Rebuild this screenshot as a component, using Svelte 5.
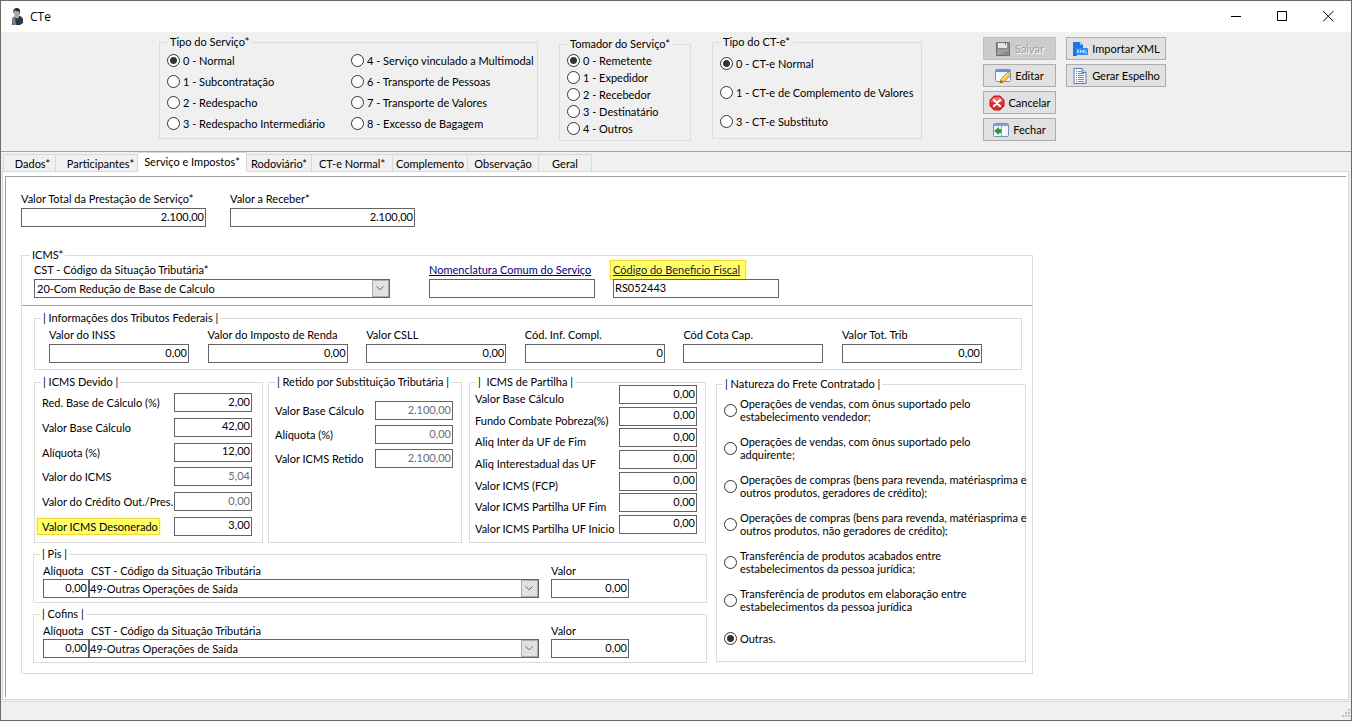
<script lang="ts">
	let tipoServico = '0 - Normal';
	let tomador = '0 - Remetente';
	let tipoCte = '0 - CT-e Normal';
	let natureza = 'Outras.';
	let activeTab = 'Serviço e Impostos*';

	const tiposServico: string[] = [
		'0 - Normal',
		'1 - Subcontratação',
		'2 - Redespacho',
		'3 - Redespacho Intermediário',
		'4 - Serviço vinculado a Multimodal',
		'6 - Transporte de Pessoas',
		'7 - Transporte de Valores',
		'8 - Excesso de Bagagem'
	];
	const tomadores: string[] = [
		'0 - Remetente',
		'1 - Expedidor',
		'2 - Recebedor',
		'3 - Destinatário',
		'4 - Outros'
	];
	const tiposCte: string[] = [
		'0 - CT-e Normal',
		'1 - CT-e de Complemento de Valores',
		'3 - CT-e Substituto'
	];
	const tabs: string[] = [
		'Dados*',
		'Participantes*',
		'Serviço e Impostos*',
		'Rodoviário*',
		'CT-e Normal*',
		'Complemento',
		'Observação',
		'Geral'
	];
	const naturezas: string[] = [
		'Operações de vendas, com ônus suportado pelo\nestabelecimento vendedor;',
		'Operações de vendas, com ônus suportado pelo\nadquirente;',
		'Operações de compras (bens para revenda, matériasprima e\noutros produtos, geradores de crédito);',
		'Operações de compras (bens para revenda, matériasprima e\noutros produtos, não geradores de crédito);',
		'Transferência de produtos acabados entre\nestabelecimentos da pessoa jurídica;',
		'Transferência de produtos em elaboração entre\nestabelecimentos da pessoa jurídica',
		'Outras.'
	];

	let totais = [
		{ label: 'Valor Total da Prestação de Serviço*', value: '2.100,00' },
		{ label: 'Valor a Receber*', value: '2.100,00' }
	];
	let federais = [
		{ label: 'Valor do INSS', value: '0,00' },
		{ label: 'Valor do Imposto de Renda', value: '0,00' },
		{ label: 'Valor CSLL', value: '0,00' },
		{ label: 'Cód. Inf. Compl.', value: '0' },
		{ label: 'Cód Cota Cap.', value: '' },
		{ label: 'Valor Tot. Trib', value: '0,00' }
	];
	let devido = [
		{ label: 'Red. Base de Cálculo (%)', value: '2,00' },
		{ label: 'Valor Base Cálculo', value: '42,00' },
		{ label: 'Alíquota (%)', value: '12,00' },
		{ label: 'Valor do ICMS', value: '5,04', disabled: true },
		{ label: 'Valor do Crédito Out./Pres.', value: '0,00', disabled: true },
		{ label: 'Valor ICMS Desonerado', value: '3,00', marked: true }
	];
	let retido = [
		{ label: 'Valor Base Cálculo', value: '2.100,00' },
		{ label: 'Alíquota (%)', value: '0,00' },
		{ label: 'Valor ICMS Retido', value: '2.100,00' }
	];
	let partilha = [
		{ label: 'Valor Base Cálculo', value: '0,00' },
		{ label: 'Fundo Combate Pobreza(%)', value: '0,00' },
		{ label: 'Aliq Inter da UF de Fim', value: '0,00' },
		{ label: 'Aliq Interestadual das UF', value: '0,00' },
		{ label: 'Valor ICMS (FCP)', value: '0,00' },
		{ label: 'Valor ICMS Partilha UF Fim', value: '0,00' },
		{ label: 'Valor ICMS Partilha UF Inicio', value: '0,00' }
	];
	let contribuicoes = [
		{ nome: 'Pis', aliquota: '0,00', valor: '0,00' },
		{ nome: 'Cofins', aliquota: '0,00', valor: '0,00' }
	];
</script>

<div class="window">
	<header class="titleBar">
		<svg class="appIcon" width="16" height="18" viewBox="0 0 16 18">
			<path d="M3 17 V12 Q3 9 7 8 L11 8 Q14 9 14 12 V15 L11 17 Z" fill="#2a3646" />
			<path d="M3 12 Q4 9 6 9 L7 17 H4 Z" fill="#7b8794" />
			<path d="M6 8 L8 13 L10 8 Z" fill="#dfe3e6" />
			<path d="M8 9 L7 11 L8 14 L9 11 Z" fill="#19222e" />
			<ellipse cx="8" cy="5" rx="3" ry="4" fill="#b3a79d" />
			<path d="M4 5 Q4 0 8 0 Q12 0 11 6 L10 3 Q7 4 6 2 L5 4 Z" fill="#252a30" />
		</svg>
		<h1>CTe</h1>
		<div class="windowButtons">
			<button aria-label="Minimizar">
				<svg width="11" height="11" viewBox="0 0 11 11"><path d="M0 5.5H10" /></svg>
			</button>
			<button aria-label="Maximizar">
				<svg width="11" height="11" viewBox="0 0 11 11"><path d="M.5.5H9.5V9.5H.5Z" /></svg>
			</button>
			<button aria-label="Fechar janela">
				<svg width="11" height="11" viewBox="0 0 11 11"><path d="M0 0L10.5 10.5M10.5 0L0 10.5" /></svg>
			</button>
		</div>
	</header>

	<section class="toolbar">
		<fieldset class="servico">
			<legend>Tipo do Serviço*</legend>
			<div class="radios">
				{#each tiposServico as item}
					<label><input type="radio" name="servico" value={item} bind:group={tipoServico} />{item}</label>
				{/each}
			</div>
		</fieldset>
		<fieldset class="tomador">
			<legend>Tomador do Serviço*</legend>
			<div class="radios">
				{#each tomadores as item}
					<label><input type="radio" name="tomador" value={item} bind:group={tomador} />{item}</label>
				{/each}
			</div>
		</fieldset>
		<fieldset class="cte">
			<legend>Tipo do CT-e*</legend>
			<div class="radios">
				{#each tiposCte as item}
					<label><input type="radio" name="cte" value={item} bind:group={tipoCte} />{item}</label>
				{/each}
			</div>
		</fieldset>

		<div class="actions">
			<button disabled>
				<svg width="16" height="16" viewBox="0 0 16 16">
					<rect x="1" y="1" width="14" height="14" rx="1" fill="#6f6f6f" />
					<rect x="2" y="2" width="12" height="12" fill="#8c8c8c" />
					<rect x="3" y="2" width="9" height="5" fill="#e6e6e6" />
					<rect x="10" y="2" width="1" height="2" fill="#777" />
					<path d="M2 14V9L14 8V9L4 14Z" fill="#a0a0a0" />
				</svg>
				Salvar
			</button>
			<button>
				<svg width="16" height="16" viewBox="0 0 16 16">
					<rect x=".5" y="1.5" width="15" height="12" rx="1" fill="#f4f9ff" stroke="#6495cf" />
					<rect x="1" y="2" width="14" height="2" fill="#5e93d8" />
					<path d="M5 15L6 11L13 4L16 7L9 14Z" fill="#f3c54e" stroke="#b98227" stroke-width=".8" />
					<path d="M7 12L14 5" stroke="#ffe79b" />
					<path d="M5 15L6 12L8 14Z" fill="#7c5928" />
				</svg>
				Editar
			</button>
			<button>
				<svg width="16" height="16" viewBox="0 0 16 16">
					<path d="M5 1H11L15 5V11L11 15H5L1 11V5Z" fill="#e32a2a" stroke="#b91419" />
					<path d="M5 2H11L14 5V7H2V5Z" fill="#f06460" />
					<path d="M5 5L11 11M11 5L5 11" stroke="#fff" stroke-width="2.4" stroke-linecap="round" />
				</svg>
				Cancelar
			</button>
			<button>
				<svg width="16" height="16" viewBox="0 0 16 16">
					<rect x=".5" y="1.5" width="15" height="13" rx="1" fill="#edf4fc" stroke="#7194be" />
					<rect x="1" y="2" width="14" height="2" fill="#75a3dd" />
					<path d="M8.5 4V14" stroke="#8baac9" />
					<rect x="9" y="4" width="3" height="10" fill="#fff" />
					<path d="M1 9L6 5V7H8V11H6V13Z" fill="#319344" />
				</svg>
				Fechar
			</button>
		</div>
		<div class="actions wide">
			<button>
				<svg width="16" height="16" viewBox="0 0 16 16">
					<path d="M1 1H8L11 4V8H5V15H1Z" fill="#1677e4" />
					<path d="M8 1V4H11Z" fill="#8fc2f8" />
					<rect x="4" y="7" width="12" height="7" rx="1" fill="#2f8df2" />
					<path d="M5 9L7 12M7 9L5 12M8.5 12V9L10 11L11.5 9V12M13 9V12H15" stroke="#d7eaff" stroke-width=".8" fill="none" />
				</svg>
				Importar XML
			</button>
			<button>
				<svg width="16" height="16" viewBox="0 0 16 16">
					<path d="M2 .5H10L14 4.5V15.5H2Z" fill="#f7fbff" stroke="#527da8" />
					<path d="M10 .5V4.5H14" fill="#bfdaf3" stroke="#527da8" />
					<path d="M6 3.5H9M6 5.5H12M6 7.5H12M6 9.5H12M6 11.5H12M6 13.5H12" stroke="#5794cc" />
					<path d="M4 3.5H5M4 5.5H5M4 7.5H5M4 9.5H5M4 11.5H5M4 13.5H5" stroke="#c47a35" />
				</svg>
				Gerar Espelho
			</button>
		</div>
	</section>

	<nav class="tabs">
		{#each tabs as tab}
			<button class:active={tab === activeTab} on:click={() => (activeTab = tab)}>{tab}</button>
		{/each}
	</nav>

	<main>
		<div class="page">
			<div class="totais">
				{#each totais as campo}
					<label class="campo">{campo.label}<input type="text" bind:value={campo.value} /></label>
				{/each}
			</div>

			<fieldset class="icms">
				<legend>ICMS*</legend>
				<div class="cst">
					<label class="campo">
						CST - Código da Situação Tributária*
						<span class="select">
							<select><option>20-Com Redução de Base de Calculo</option></select>
							<svg width="17" height="17" viewBox="0 0 17 17"><path d="M4 6L8 10L12 6" /></svg>
						</span>
					</label>
					<div class="campo codigo">
						<a href="#nomenclatura">Nomenclatura Comum do Serviço</a>
						<input type="text" aria-label="Nomenclatura Comum do Serviço" />
					</div>
					<div class="campo codigo">
						<a class="marked" href="#beneficio">Código do Beneficio Fiscal</a>
						<input type="text" aria-label="Código do Beneficio Fiscal" value="RS052443" />
					</div>
				</div>

				<fieldset class="federais">
					<legend>| Informações dos Tributos Federais |</legend>
					<div class="linha">
						{#each federais as campo}
							<label class="campo">{campo.label}<input type="text" bind:value={campo.value} /></label>
						{/each}
					</div>
				</fieldset>

				<div class="grupos">
					<div class="esquerda">
						<div class="impostos">
							<fieldset class="devido">
								<legend>| ICMS Devido |</legend>
								<div class="lista">
									{#each devido as campo}
										<label>
											<span class:marked={campo.marked}>{campo.label}</span>
											<input type="text" bind:value={campo.value} disabled={campo.disabled} />
										</label>
									{/each}
								</div>
							</fieldset>
							<fieldset class="retido">
								<legend>| Retido por Substituição Tributária |</legend>
								<div class="lista">
									{#each retido as campo}
										<label>
											<span>{campo.label}</span>
											<input type="text" bind:value={campo.value} disabled />
										</label>
									{/each}
								</div>
							</fieldset>
							<fieldset class="partilha">
								<legend>|&nbsp; ICMS de Partilha |</legend>
								<div class="lista">
									{#each partilha as campo}
										<label>
											<span>{campo.label}</span>
											<input type="text" bind:value={campo.value} />
										</label>
									{/each}
								</div>
							</fieldset>
						</div>

						{#each contribuicoes as item}
							<fieldset class="contribuicao">
								<legend>| {item.nome} |</legend>
								<div class="linha">
									<label class="campo aliquota">Alíquota<input type="text" bind:value={item.aliquota} /></label>
									<label class="campo situacao">
										CST - Código da Situação Tributária
										<span class="select">
											<select><option>49-Outras Operações de Saída</option></select>
											<svg width="17" height="17" viewBox="0 0 17 17"><path d="M4 6L8 10L12 6" /></svg>
										</span>
									</label>
									<label class="campo valor">Valor<input type="text" bind:value={item.valor} /></label>
								</div>
							</fieldset>
						{/each}
					</div>

					<fieldset class="natureza">
						<legend>| Natureza do Frete Contratado |</legend>
						<div class="radios">
							{#each naturezas as item}
								<label><input type="radio" name="natureza" value={item} bind:group={natureza} />{item}</label>
							{/each}
						</div>
					</fieldset>
				</div>
			</fieldset>
		</div>
	</main>

	<footer>
		<svg width="12" height="12" viewBox="0 0 12 12">
			<path d="M9 1h2v2h-2zM9 4h2v2h-2zM9 7h2v2h-2zM6 4h2v2h-2zM6 7h2v2h-2zM3 7h2v2h-2z" fill="#bfbfbf" />
		</svg>
	</footer>
</div>

<style>
	:global(body) {
		margin: 0;
	}
	.window {
		display: flex;
		flex-direction: column;
		box-sizing: border-box;
		min-width: 1180px;
		min-height: 100vh;
		border: 1px solid #6b6b6b;
		background: #f0f0f0;
		color: #000;
		font-family: Lato, Roboto, sans-serif;
		font-size: 11px;
		line-height: 14px;
	}
	.window * {
		box-sizing: border-box;
	}
	button,
	input,
	select {
		font: inherit;
		color: inherit;
		margin: 0;
		border-radius: 0;
	}

	.titleBar {
		display: flex;
		align-items: center;
		height: 31px;
		padding-left: 8px;
		background: white;
	}
	h1 {
		flex: 1;
		margin: 0 0 0 5px;
		font: 12px 'Open Sans', sans-serif;
	}
	.windowButtons {
		display: flex;
	}
	.windowButtons button {
		display: flex;
		align-items: center;
		justify-content: center;
		width: 46px;
		height: 29px;
		padding: 0;
		border: none;
		background: transparent;
	}
	.windowButtons path {
		fill: none;
		stroke: #000;
	}

	.toolbar {
		display: flex;
		align-items: flex-start;
		height: 120px;
		padding: 3px 0 0 158px;
		border-bottom: 1px solid #a0a0a0;
	}
	fieldset {
		min-width: 0;
		margin: 0;
		padding: 0;
		border: 1px solid #dcdcdc;
	}
	legend {
		margin-left: 6px;
		padding: 0 2px;
		white-space: nowrap;
	}
	.toolbar legend {
		margin-left: 7px;
		padding: 0 3px;
	}
	.icms > legend {
		margin-left: 8px;
	}
	.radios {
		display: grid;
	}
	.radios label {
		display: flex;
		align-items: center;
		gap: 3px;
		white-space: pre;
	}
	input[type='radio'] {
		appearance: none;
		flex: none;
		width: 13px;
		height: 13px;
		border: 1px solid #333;
		border-radius: 50%;
		background: white;
	}
	input[type='radio']:checked {
		background: radial-gradient(circle, #333 0 3px, white 4px);
	}
	.servico {
		width: 379px;
		height: 104px;
	}
	.servico .radios {
		grid-template-columns: 184px 1fr;
		grid-template-rows: repeat(4, 21px);
		grid-auto-flow: column;
		padding: 1px 0 0 7px;
	}
	.tomador {
		width: 132px;
		height: 104px;
		margin: 2px 21px 0;
	}
	.tomador .radios {
		grid-auto-rows: 17px;
		padding: 1px 0 0 7px;
	}
	.cte {
		width: 210px;
		height: 104px;
	}
	.cte .radios {
		grid-auto-rows: 29px;
		padding-left: 7px;
	}

	.actions {
		display: flex;
		flex-direction: column;
		gap: 4px;
		width: 73px;
		margin: 2px 10px 0 61px;
	}
	.actions.wide {
		width: 100px;
		margin: 2px 0 0;
	}
	.actions button {
		display: flex;
		align-items: center;
		justify-content: center;
		gap: 4px;
		height: 23px;
		padding: 0;
		border: 1px solid #adadad;
		background: #e1e1e1;
		white-space: nowrap;
	}
	.actions button:disabled {
		border-color: #bfbfbf;
		background: #ccc;
		color: #a0a0a0;
		text-shadow: 1px 1px white;
	}

	.tabs {
		display: grid;
		grid-template-columns: 53px 82px 109px 65px 81px 75px 71px 53px;
		align-items: end;
		height: 20px;
		padding-left: 2px;
		margin-bottom: -1px;
		z-index: 1;
	}
	.tabs button {
		height: 18px;
		padding: 2px 0 0;
		border: 1px solid #d9d9d9;
		border-left: none;
		background: #f0f0f0;
	}
	.tabs button:first-child {
		padding-left: 6px;
		border-left: 1px solid #d9d9d9;
	}
	.tabs button:nth-child(2) {
		padding-left: 8px;
	}
	.tabs button.active {
		height: 20px;
		padding-bottom: 2px;
		border-bottom-color: white;
		background: white;
	}

	main {
		flex: 1;
		display: flex;
		margin: 0 2px 0 1px;
		padding: 4px 2px 2px;
		border: 1px solid #d9d9d9;
		background: white;
	}
	.page {
		flex: 1;
		padding: 15px;
		border: 1px solid #a0a0a0;
		border-width: 1px 0 0 1px;
	}
	.campo {
		display: flex;
		flex-direction: column;
		gap: 2px;
		white-space: nowrap;
	}
	input[type='text'] {
		width: 100%;
		height: 19px;
		padding: 0 1px 3px;
		border: 1px solid #646464;
		background: white;
		text-align: right;
	}
	input:disabled {
		color: #6d6d6d;
	}
	.totais {
		display: flex;
		gap: 24px;
		height: 56px;
	}
	.totais .campo {
		width: 185px;
	}

	.icms {
		width: 1012px;
		padding-bottom: 10px;
	}
	.cst {
		display: flex;
		padding: 1px 0 7px 12px;
		border-bottom: 1px solid #a0a0a0;
	}
	.cst > label {
		width: 356px;
		margin-right: 39px;
	}
	.codigo {
		width: 166px;
		margin-right: 18px;
	}
	.codigo input[type='text'] {
		text-align: left;
	}
	a {
		align-self: flex-start;
		color: #000080;
	}
	.marked {
		margin: -3px;
		padding: 2px;
		border: 1px solid #f3d53c;
		background: #ffff66;
		box-shadow: 0 0 2px #ffee66;
	}
	a.marked {
		padding-right: 5px;
		color: #1c1c30;
	}
	span.marked {
		margin: -2px -5px;
		padding: 0 1px 0 4px;
	}
	.select {
		display: block;
		position: relative;
	}
	select {
		appearance: none;
		display: block;
		width: 100%;
		height: 19px;
		padding: 0 20px 0 2px;
		border: 1px solid #646464;
		background: white;
	}
	.select svg {
		position: absolute;
		top: 1px;
		right: 1px;
		border: 1px solid #adadad;
		background: #e1e1e1;
		pointer-events: none;
	}
	.select path {
		fill: none;
		stroke: #555;
	}

	.federais {
		width: 988px;
		margin: 5px 0 0 12px;
		padding-bottom: 6px;
	}
	.federais .linha {
		display: flex;
		justify-content: space-between;
		padding: 3px 39px 0 14px;
	}
	.federais .campo {
		width: 140px;
	}

	.grupos {
		display: flex;
		gap: 9px;
		margin: 5px 0 0 11px;
	}
	.esquerda {
		width: 674px;
	}
	.impostos {
		display: flex;
		height: 168px;
		padding-left: 1px;
	}
	.lista {
		display: flex;
		flex-direction: column;
		justify-content: space-between;
	}
	.lista label {
		display: flex;
		align-items: center;
		justify-content: space-between;
		white-space: nowrap;
	}
	.lista input[type='text'] {
		width: 78px;
	}
	.devido {
		width: 229px;
		margin-right: 5px;
	}
	.devido .lista {
		height: 143px;
		margin: 4px 10px 0 7px;
	}
	.retido {
		width: 194px;
		margin-right: 7px;
	}
	.retido .lista {
		height: 67px;
		margin: 12px 8px 0 6px;
	}
	.partilha {
		width: 237px;
	}
	.partilha .lista {
		height: 149px;
		margin: -4px 8px 0 5px;
	}
	.lista span {
		padding-top: 1px;
	}
	.partilha label {
		align-items: flex-end;
	}
	.partilha span {
		line-height: 10px;
	}

	.contribuicao {
		height: 56px;
		margin-top: 4px;
	}
	.contribuicao .linha {
		display: flex;
		padding: 3px 0 0 9px;
	}
	.contribuicao .campo {
		gap: 1px;
	}
	.aliquota {
		width: 46px;
	}
	.situacao {
		width: 450px;
		margin-right: 12px;
		text-indent: 2px;
	}
	.situacao select {
		padding-left: 0;
	}
	.valor {
		width: 78px;
	}

	.natureza {
		width: 310px;
		height: 285px;
		margin-top: 2px;
	}
	.natureza .radios {
		grid-auto-rows: 38px;
		padding-left: 7px;
		line-height: 13px;
	}

	footer {
		display: flex;
		align-items: flex-end;
		justify-content: flex-end;
		height: 19px;
		margin-top: 1px;
		border-top: 1px solid #d9d9d9;
	}
</style>
